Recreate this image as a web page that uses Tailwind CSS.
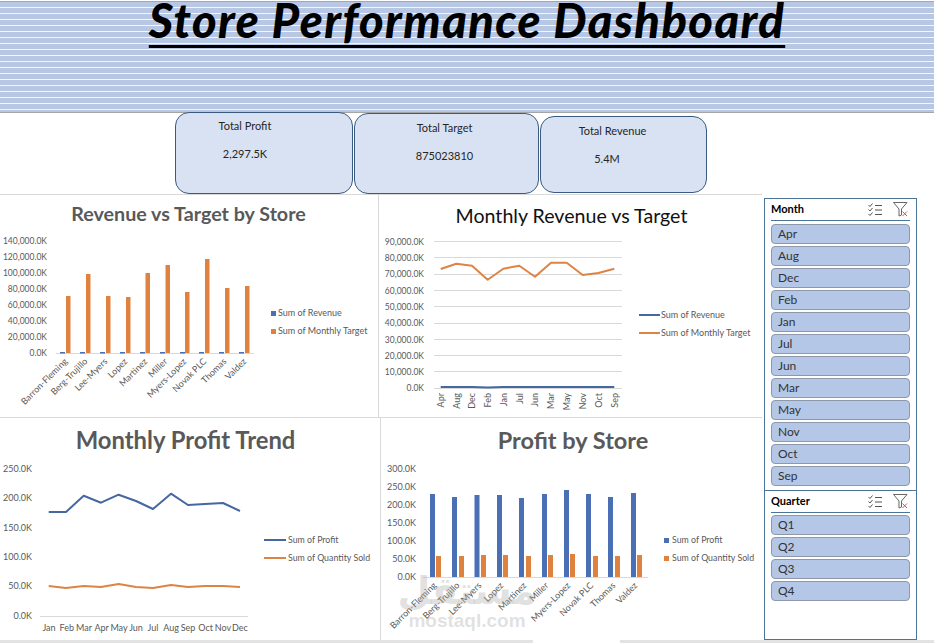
<!DOCTYPE html>
<html lang="en">

<head>
    <meta charset="UTF-8" />
    <title>Store Performance Dashboard</title>
    <script src="https://cdn.jsdelivr.net/npm/@tailwindcss/browser@4"></script>
</head>

<body class="bg-white w-[934px] h-[643px] overflow-hidden font-['Lato',sans-serif] text-[#262626]">

    <!-- Banner -->
    <header class="mt-px h-[112px] border-y border-[#a6a6a6] bg-[repeating-linear-gradient(to_bottom,#b7c7e4_0,#b7c7e4_5px,#f3f7fd_5px,#f3f7fd_6px)] flex justify-center">
        <h1 class="text-[47px] leading-[34px] tracking-[1.4px] font-black italic text-black underline decoration-[3px] underline-offset-[7px] h-[48px] pt-[1px]">Store Performance Dashboard</h1>
    </header>

    <!-- KPI cards -->
    <section class="h-[81px] pl-[175px] flex items-start text-[11px] text-center">
        <div class="w-[178px] h-[82px] -mt-px pt-[6px] pr-[38px] bg-[#d9e2f3] border border-[#3a5a80] rounded-[14px]">
            <p class="leading-[14px]">Total Profit</p>
            <p class="leading-[14px] mt-[14px]">2,297.5K</p>
        </div>
        <div class="w-[185px] h-[81px] ml-px pt-[7px] pr-[4px] bg-[#d9e2f3] border border-[#3a5a80] rounded-[14px]">
            <p class="leading-[14px]">Total Target</p>
            <p class="leading-[14px] mt-[14px]">875023810</p>
        </div>
        <div class="w-[167px] h-[77px] ml-px mt-[3px] pt-[7px] pr-[22px] bg-[#d9e2f3] border border-[#3a5a80] rounded-[14px]">
            <p class="leading-[14px]">Total Revenue</p>
            <p class="leading-[14px] mt-[14px] pr-[11px]">5.4M</p>
        </div>
    </section>

    <main class="flex items-start">
        <!-- Charts -->
        <div class="w-[762px] shrink-0">
            <div class="flex h-[224px] border-t border-[#d9d9d9]">
                <div class="w-[379px] border-r border-b border-[#d9d9d9]">
                    <svg class="block" width="378" height="222" viewBox="0 195 378 222" font-family="Lato, sans-serif">
                        <text x="188.5" y="221" text-anchor="middle" font-size="19.7" font-weight="700" fill="#595959">Revenue vs Target by Store</text>
                        <g font-size="8.5" fill="#595959" text-anchor="end">
                            <text x="47" y="244">140,000.0K</text>
                            <text x="47" y="260">120,000.0K</text>
                            <text x="47" y="276">100,000.0K</text>
                            <text x="47" y="292">80,000.0K</text>
                            <text x="47" y="308">60,000.0K</text>
                            <text x="47" y="324">40,000.0K</text>
                            <text x="47" y="340">20,000.0K</text>
                            <text x="47" y="356">0.0K</text>
                        </g>
                        <line x1="56" y1="353.5" x2="254" y2="353.5" stroke="#d9d9d9" />
                        <g fill="#df8240">
                            <rect x="66" y="296" width="4.5" height="57" />
                            <rect x="86" y="274" width="4.5" height="79" />
                            <rect x="106" y="296" width="4.5" height="57" />
                            <rect x="126" y="297" width="4.5" height="56" />
                            <rect x="145.5" y="273" width="4.5" height="80" />
                            <rect x="165.5" y="265" width="4.5" height="88" />
                            <rect x="185" y="292" width="4.5" height="61" />
                            <rect x="205" y="259" width="4.5" height="94" />
                            <rect x="225" y="288" width="4.5" height="65" />
                            <rect x="245" y="286" width="4.5" height="67" />
                        </g>
                        <g fill="#4a6fb5">
                            <rect x="60" y="352" width="5" height="1.5" />
                            <rect x="80" y="352" width="5" height="1.5" />
                            <rect x="100" y="352" width="5" height="1.5" />
                            <rect x="120" y="352" width="5" height="1.5" />
                            <rect x="140" y="352" width="5" height="1.5" />
                            <rect x="160" y="352" width="5" height="1.5" />
                            <rect x="180" y="352" width="5" height="1.5" />
                            <rect x="199" y="352" width="5" height="1.5" />
                            <rect x="219" y="352" width="5" height="1.5" />
                            <rect x="239" y="352" width="5" height="1.5" />
                        </g>
                        <g font-size="9" fill="#595959" text-anchor="end">
                            <text transform="translate(68 362) rotate(-45)">Barron-Fleming</text>
                            <text transform="translate(88 362) rotate(-45)">Berg-Trujillo</text>
                            <text transform="translate(108 362) rotate(-45)">Lee-Myers</text>
                            <text transform="translate(128 362) rotate(-45)">Lopez</text>
                            <text transform="translate(148 362) rotate(-45)">Martinez</text>
                            <text transform="translate(168 362) rotate(-45)">Miller</text>
                            <text transform="translate(187 362) rotate(-45)">Myers-Lopez</text>
                            <text transform="translate(207 362) rotate(-45)">Novak PLC</text>
                            <text transform="translate(227 362) rotate(-45)">Thomas</text>
                            <text transform="translate(247 362) rotate(-45)">Valdez</text>
                        </g>
                        <rect x="271" y="311" width="5" height="5" fill="#4a6fb5" />
                        <rect x="271" y="329" width="5" height="5" fill="#df8240" />
                        <g font-size="9" fill="#595959">
                            <text x="278" y="316">Sum of Revenue</text>
                            <text x="278" y="334">Sum of Monthly Target</text>
                        </g>
                    </svg>
                </div>
                <div class="w-[383px] border-b border-[#d9d9d9]">
                    <svg class="block" width="383" height="222" viewBox="379 195 383 222" font-family="Lato, sans-serif">
                        <text x="571.5" y="223" text-anchor="middle" font-size="19.6" fill="#111111">Monthly Revenue vs Target</text>
                        <g stroke="#d9d9d9">
                            <line x1="434" y1="241.5" x2="622" y2="241.5" />
                            <line x1="434" y1="257.5" x2="622" y2="257.5" />
                            <line x1="434" y1="274.5" x2="622" y2="274.5" />
                            <line x1="434" y1="290.5" x2="622" y2="290.5" />
                            <line x1="434" y1="306.5" x2="622" y2="306.5" />
                            <line x1="434" y1="323.5" x2="622" y2="323.5" />
                            <line x1="434" y1="339.5" x2="622" y2="339.5" />
                            <line x1="434" y1="355.5" x2="622" y2="355.5" />
                            <line x1="434" y1="371.5" x2="622" y2="371.5" />
                            <line x1="434" y1="388.5" x2="622" y2="388.5" />
                        </g>
                        <g font-size="8.5" fill="#595959" text-anchor="end">
                            <text x="424" y="245">90,000.0K</text>
                            <text x="424" y="261">80,000.0K</text>
                            <text x="424" y="277">70,000.0K</text>
                            <text x="424" y="294">60,000.0K</text>
                            <text x="424" y="310">50,000.0K</text>
                            <text x="424" y="326">40,000.0K</text>
                            <text x="424" y="343">30,000.0K</text>
                            <text x="424" y="359">20,000.0K</text>
                            <text x="424" y="375">10,000.0K</text>
                            <text x="424" y="391">0.0K</text>
                        </g>
                        <polyline fill="none" stroke="#dc8446" stroke-width="2" stroke-linejoin="round" points="440.7,269 456.3,263.7 472,265.7 487.7,279.7 503.3,268.7 519.3,265.7 535,276.7 551,262.7 566.7,262.7 582.7,275 598.3,273 614.3,268.7" />
                        <polyline fill="none" stroke="#44689f" stroke-width="2" points="440.7,387 472,387 487.7,387.6 503.3,387 614.3,387" />
                        <g font-size="9" fill="#595959" text-anchor="end">
                            <text transform="translate(444 393) rotate(-90)">Apr</text>
                            <text transform="translate(459.5 393) rotate(-90)">Aug</text>
                            <text transform="translate(475 393) rotate(-90)">Dec</text>
                            <text transform="translate(491 393) rotate(-90)">Feb</text>
                            <text transform="translate(506.5 393) rotate(-90)">Jan</text>
                            <text transform="translate(522.5 393) rotate(-90)">Jul</text>
                            <text transform="translate(538 393) rotate(-90)">Jun</text>
                            <text transform="translate(554 393) rotate(-90)">Mar</text>
                            <text transform="translate(570 393) rotate(-90)">May</text>
                            <text transform="translate(586 393) rotate(-90)">Nov</text>
                            <text transform="translate(601.5 393) rotate(-90)">Oct</text>
                            <text transform="translate(617.5 393) rotate(-90)">Sep</text>
                        </g>
                        <line x1="639" y1="315" x2="660" y2="315" stroke="#44689f" stroke-width="2" />
                        <line x1="639" y1="333" x2="660" y2="333" stroke="#dc8446" stroke-width="2" />
                        <g font-size="9" fill="#595959">
                            <text x="661" y="318">Sum of Revenue</text>
                            <text x="661" y="336">Sum of Monthly Target</text>
                        </g>
                    </svg>
                </div>
            </div>
            <div class="flex h-[222px]">
                <div class="w-[381px] border-r border-[#d9d9d9]">
                    <svg class="block" width="380" height="222" viewBox="0 418 380 222" font-family="Lato, sans-serif">
                        <text x="185.5" y="449" text-anchor="middle" font-size="23.8" font-weight="700" fill="#595959">Monthly Profit Trend</text>
                        <g font-size="9" fill="#595959" text-anchor="end">
                            <text x="32" y="472">250.0K</text>
                            <text x="32" y="501">200.0K</text>
                            <text x="32" y="531">150.0K</text>
                            <text x="32" y="560">100.0K</text>
                            <text x="32" y="589">50.0K</text>
                            <text x="32" y="619">0.0K</text>
                        </g>
                        <line x1="40" y1="616.5" x2="248" y2="616.5" stroke="#d9d9d9" />
                        <polyline fill="none" stroke="#44689f" stroke-width="2" stroke-linejoin="round" points="48.7,512 66,512 83.7,495.7 101,502.7 118.6,494.7 136,501 153,509 171,493.7 188,505 205,504 223,503 240,511" />
                        <polyline fill="none" stroke="#dc8446" stroke-width="2" stroke-linejoin="round" points="48.7,586 66,588 83.7,586 101,587 118.6,584 136,587 153,588 171,585 188,587 205,586 223,586 240,587" />
                        <g font-size="9" fill="#595959" text-anchor="middle">
                            <text x="49" y="631">Jan</text>
                            <text x="66.7" y="631">Feb</text>
                            <text x="84" y="631">Mar</text>
                            <text x="101.7" y="631">Apr</text>
                            <text x="119" y="631">May</text>
                            <text x="136" y="631">Jun</text>
                            <text x="153" y="631">Jul</text>
                            <text x="171" y="631">Aug</text>
                            <text x="188" y="631">Sep</text>
                            <text x="205.7" y="631">Oct</text>
                            <text x="223" y="631">Nov</text>
                            <text x="240" y="631">Dec</text>
                        </g>
                        <line x1="264" y1="540" x2="286" y2="540" stroke="#44689f" stroke-width="2" />
                        <line x1="264" y1="558" x2="286" y2="558" stroke="#dc8446" stroke-width="2" />
                        <g font-size="8.8" fill="#595959">
                            <text x="288" y="543">Sum of Profit</text>
                            <text x="288" y="561">Sum of Quantity Sold</text>
                        </g>
                    </svg>
                </div>
                <div class="w-[381px]">
                    <svg class="block" width="381" height="222" viewBox="381 418 381 222" font-family="Lato, sans-serif">
                        <text x="573" y="449" text-anchor="middle" font-size="23.5" font-weight="700" fill="#595959">Profit by Store</text>
                        <g font-size="9" fill="#595959" text-anchor="end">
                            <text x="416" y="472">300.0K</text>
                            <text x="416" y="490">250.0K</text>
                            <text x="416" y="508">200.0K</text>
                            <text x="416" y="526">150.0K</text>
                            <text x="416" y="544">100.0K</text>
                            <text x="416" y="562">50.0K</text>
                            <text x="416" y="580">0.0K</text>
                        </g>
                        <line x1="423" y1="577.5" x2="648" y2="577.5" stroke="#d9d9d9" />
                        <g fill="#4a6fb5">
                            <rect x="430" y="494" width="5" height="83" />
                            <rect x="452" y="497" width="5" height="80" />
                            <rect x="474.5" y="495" width="5" height="82" />
                            <rect x="497" y="495" width="5" height="82" />
                            <rect x="519" y="498" width="5" height="79" />
                            <rect x="542" y="494" width="5" height="83" />
                            <rect x="564" y="490" width="5" height="87" />
                            <rect x="586" y="494" width="5" height="83" />
                            <rect x="608" y="497" width="5" height="80" />
                            <rect x="631" y="493" width="5" height="84" />
                        </g>
                        <g fill="#df8240">
                            <rect x="436" y="556" width="5" height="21" />
                            <rect x="459" y="556" width="5" height="21" />
                            <rect x="481" y="555" width="5" height="22" />
                            <rect x="503" y="555" width="5" height="22" />
                            <rect x="526" y="556" width="5" height="21" />
                            <rect x="548" y="555" width="5" height="22" />
                            <rect x="570" y="554" width="5" height="23" />
                            <rect x="593" y="556" width="5" height="21" />
                            <rect x="615" y="556" width="5" height="21" />
                            <rect x="637" y="555" width="5" height="22" />
                        </g>
                        <g font-size="9" fill="#595959" text-anchor="end">
                            <text transform="translate(437 586) rotate(-45)">Barron-Fleming</text>
                            <text transform="translate(460 586) rotate(-45)">Berg-Trujillo</text>
                            <text transform="translate(482 586) rotate(-45)">Lee-Myers</text>
                            <text transform="translate(504 586) rotate(-45)">Lopez</text>
                            <text transform="translate(527 586) rotate(-45)">Martinez</text>
                            <text transform="translate(549 586) rotate(-45)">Miller</text>
                            <text transform="translate(571 586) rotate(-45)">Myers-Lopez</text>
                            <text transform="translate(594 586) rotate(-45)">Novak PLC</text>
                            <text transform="translate(616 586) rotate(-45)">Thomas</text>
                            <text transform="translate(638 586) rotate(-45)">Valdez</text>
                        </g>
                        <rect x="664" y="538" width="5" height="5" fill="#4a6fb5" />
                        <rect x="664" y="556" width="5" height="5" fill="#df8240" />
                        <g font-size="8.8" fill="#595959">
                            <text x="672" y="543">Sum of Profit</text>
                            <text x="672" y="561">Sum of Quantity Sold</text>
                        </g>
                        <!-- watermark -->
                        <g fill="#a8a8a8" fill-opacity="0.35" text-anchor="middle" font-weight="700">
                            <text x="467" y="604" font-size="38" font-family="DejaVu Sans, sans-serif">مستقل</text>
                            <text x="467" y="627" font-size="19" font-family="Liberation Sans, sans-serif">mostaql.com</text>
                        </g>
                    </svg>
                </div>
            </div>
            <div class="flex h-[3px] bg-[#e3e3e3]">
                <div class="ml-[533px] w-[87px] bg-white"></div>
            </div>
        </div>

        <!-- Slicers -->
        <aside class="w-[172px] h-[448px]">
            <div class="ml-[2px] mt-[4px] w-[153px] h-[293px] border border-[#4b7596] px-[6px] bg-white">
                <div class="h-[22px] flex items-center justify-between border-b border-[#4b7596] pr-[2px]">
                    <span class="text-[11px] font-bold text-black">Month</span>
                    <span class="flex items-center gap-[10px]">
                        <svg width="15" height="14" viewBox="0 0 15 14" fill="none" stroke="#555555" stroke-width="1">
                            <path d="M0.5 2 L2 3.5 L4.5 0.5 M0.5 6.5 L2 8 L4.5 5 M0.5 11 L2 12.5 L4.5 9.5" />
                            <path d="M7 2.5 H14 M7 7 H14 M7 11.5 H14" />
                        </svg>
                        <svg width="15" height="15" viewBox="0 0 15 15" fill="none">
                            <path d="M0.5 0.5 H14 L8.5 7 V13 L6 14 V7 Z" stroke="#666666" />
                            <path d="M9.5 9.5 L14 14 M14 9.5 L9.5 14" stroke="#d9534f" />
                        </svg>
                    </span>
                </div>
                <ul class="mt-[3px] flex flex-col gap-[2px] text-[12px] text-[#333333]">
                    <li class="h-[20px] leading-[18px] pl-[6px] bg-[#b4c7e7] border border-[#8d99ab] rounded-[4px]">Apr</li>
                    <li class="h-[20px] leading-[18px] pl-[6px] bg-[#b4c7e7] border border-[#8d99ab] rounded-[4px]">Aug</li>
                    <li class="h-[20px] leading-[18px] pl-[6px] bg-[#b4c7e7] border border-[#8d99ab] rounded-[4px]">Dec</li>
                    <li class="h-[20px] leading-[18px] pl-[6px] bg-[#b4c7e7] border border-[#8d99ab] rounded-[4px]">Feb</li>
                    <li class="h-[20px] leading-[18px] pl-[6px] bg-[#b4c7e7] border border-[#8d99ab] rounded-[4px]">Jan</li>
                    <li class="h-[20px] leading-[18px] pl-[6px] bg-[#b4c7e7] border border-[#8d99ab] rounded-[4px]">Jul</li>
                    <li class="h-[20px] leading-[18px] pl-[6px] bg-[#b4c7e7] border border-[#8d99ab] rounded-[4px]">Jun</li>
                    <li class="h-[20px] leading-[18px] pl-[6px] bg-[#b4c7e7] border border-[#8d99ab] rounded-[4px]">Mar</li>
                    <li class="h-[20px] leading-[18px] pl-[6px] bg-[#b4c7e7] border border-[#8d99ab] rounded-[4px]">May</li>
                    <li class="h-[20px] leading-[18px] pl-[6px] bg-[#b4c7e7] border border-[#8d99ab] rounded-[4px]">Nov</li>
                    <li class="h-[20px] leading-[18px] pl-[6px] bg-[#b4c7e7] border border-[#8d99ab] rounded-[4px]">Oct</li>
                    <li class="h-[20px] leading-[18px] pl-[6px] bg-[#b4c7e7] border border-[#8d99ab] rounded-[4px]">Sep</li>
                </ul>
            </div>
            <div class="ml-[2px] w-[153px] h-[149px] border border-t-0 border-[#4b7596] px-[6px] bg-white">
                <div class="h-[22px] flex items-center justify-between border-b border-[#4b7596] pr-[2px]">
                    <span class="text-[11px] font-bold text-black">Quarter</span>
                    <span class="flex items-center gap-[10px]">
                        <svg width="15" height="14" viewBox="0 0 15 14" fill="none" stroke="#555555" stroke-width="1">
                            <path d="M0.5 2 L2 3.5 L4.5 0.5 M0.5 6.5 L2 8 L4.5 5 M0.5 11 L2 12.5 L4.5 9.5" />
                            <path d="M7 2.5 H14 M7 7 H14 M7 11.5 H14" />
                        </svg>
                        <svg width="15" height="15" viewBox="0 0 15 15" fill="none">
                            <path d="M0.5 0.5 H14 L8.5 7 V13 L6 14 V7 Z" stroke="#666666" />
                            <path d="M9.5 9.5 L14 14 M14 9.5 L9.5 14" stroke="#d9534f" />
                        </svg>
                    </span>
                </div>
                <ul class="mt-[2px] flex flex-col gap-[2px] text-[12px] text-[#333333]">
                    <li class="h-[20px] leading-[18px] pl-[6px] bg-[#b4c7e7] border border-[#8d99ab] rounded-[4px]">Q1</li>
                    <li class="h-[20px] leading-[18px] pl-[6px] bg-[#b4c7e7] border border-[#8d99ab] rounded-[4px]">Q2</li>
                    <li class="h-[20px] leading-[18px] pl-[6px] bg-[#b4c7e7] border border-[#8d99ab] rounded-[4px]">Q3</li>
                    <li class="h-[20px] leading-[18px] pl-[6px] bg-[#b4c7e7] border border-[#8d99ab] rounded-[4px]">Q4</li>
                </ul>
            </div>
            <div class="h-[3px] bg-[#e3e3e3]"></div>
        </aside>
    </main>

</body>

</html>
